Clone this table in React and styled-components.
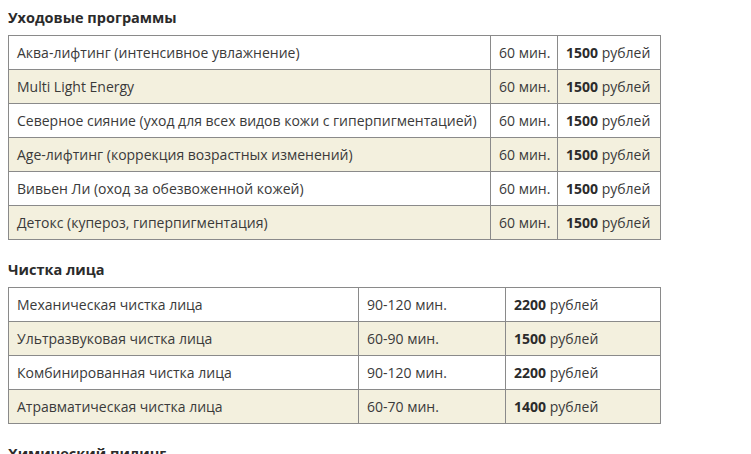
import React from 'react'
import styled, { createGlobalStyle } from 'styled-components'

const GlobalStyle = createGlobalStyle`
  body {
    margin: 0;
    background: #fff;
    font-family: 'Open Sans', 'Noto Sans', sans-serif;
    color: #333;
  }
`

const Page = styled.div`
  padding: 8px 0 0 8px;
  width: 652px;
`

const Section = styled.section`
  margin-bottom: 20px;
`

const Title = styled.h3`
  margin: 0 0 7px;
  font-size: 14.5px;
  line-height: 20px;
  font-weight: 700;
  color: #2b2b2b;
`

const PriceTable = styled.table`
  width: 100%;
  border-collapse: collapse;
  table-layout: fixed;
  font-size: 14px;
`

const Row = styled.tr`
  background: ${p => (p.$alt ? '#f3f0de' : '#fff')};
`

const Cell = styled.td`
  border: 1px solid #8a8a8a;
  padding: 7px 8px;
  height: 19px;
  line-height: 19px;
  white-space: nowrap;
  color: #3a3a3a;
`

const Price = styled.b`
  font-weight: 700;
  color: #2b2b2b;
`

const care = [
  'Аква-лифтинг (интенсивное увлажнение)',
  'Multi Light Energy',
  'Северное сияние (уход для всех видов кожи с гиперпигментацией)',
  'Age-лифтинг (коррекция возрастных изменений)',
  'Вивьен Ли (оход за обезвоженной кожей)',
  'Детокс (купероз, гиперпигментация)',
].map(name => ({ name, time: '60 мин.', price: '1500' }))

const cleaning = [
  { name: 'Механическая чистка лица', time: '90-120 мин.', price: '2200' },
  { name: 'Ультразвуковая чистка лица', time: '60-90 мин.', price: '1500' },
  { name: 'Комбинированная чистка лица', time: '90-120 мин.', price: '2200' },
  { name: 'Атравматическая чистка лица', time: '60-70 мин.', price: '1400' },
]

const Table = ({ items, cols }) => (
  <PriceTable>
    <colgroup>
      {cols.map((w, i) => <col key={i} style={{ width: w }} />)}
    </colgroup>
    <tbody>
      {items.map((itm, index) => (
        <Row key={index} $alt={index % 2 === 1}>
          <Cell>{itm.name}</Cell>
          <Cell>{itm.time}</Cell>
          <Cell><Price>{itm.price}</Price> рублей</Cell>
        </Row>
      ))}
    </tbody>
  </PriceTable>
)

export default function App() {
  return (
    <Page>
      <GlobalStyle />
      <Section>
        <Title>Уходовые программы</Title>
        <Table items={care} cols={[482, 67, 103]} />
      </Section>
      <Section>
        <Title>Чистка лица</Title>
        <Table items={cleaning} cols={[350, 147, 155]} />
      </Section>
      <Section>
        <Title>Химический пилинг</Title>
      </Section>
    </Page>
  )
}
